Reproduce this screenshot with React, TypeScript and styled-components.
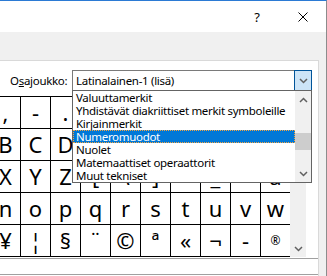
import React from "react";
import styled, { createGlobalStyle } from "styled-components";

const rows: string[][] = [
  [",", "-", ".", "/", "0", "1", "2", "3", "4", "5"],
  ["B", "C", "D", "E", "F", "G", "H", "I", "J", "K"],
  ["X", "Y", "Z", "[", "\\", "]", "^", "_", "`", "a"],
  ["n", "o", "p", "q", "r", "s", "t", "u", "v", "w"],
  ["¥", "¦", "§", "¨", "©", "ª", "«", "¬", "-", "®"],
];

const subsets = [
  "Valuuttamerkit",
  "Yhdistävät diakriittiset merkit symboleille",
  "Kirjainmerkit",
  "Numeromuodot",
  "Nuolet",
  "Matemaattiset operaattorit",
  "Muut tekniset",
];

const Chevron = ({ up }: { up?: boolean }) => (
  <svg width="9" height="6" viewBox="0 0 9 6">
    <path
      d={up ? "M1 5 L4.5 1.5 L8 5" : "M1 1 L4.5 4.5 L8 1"}
      fill="none"
      stroke="#606060"
      strokeWidth="1.5"
    />
  </svg>
);

const App = () => {
  return (
    <>
      <GlobalStyle />
      <Window>
        <TitleBar>
          <CaptionButton>
            <HelpMark>?</HelpMark>
          </CaptionButton>
          <CaptionButton>
            <svg width="10" height="10" viewBox="0 0 10 10">
              <path d="M0.5 0.5 L9.5 9.5 M9.5 0.5 L0.5 9.5" stroke="#000" strokeWidth="1" />
            </svg>
          </CaptionButton>
        </TitleBar>
        <Body>
          <Panel>
            <SubsetRow>
              <Label>
                O<u>s</u>ajoukko:
              </Label>
              <Combo>
                <ComboText>Latinalainen-1 (lisä)</ComboText>
                <ComboButton>
                  <Chevron />
                </ComboButton>
                <DropList>
                  <Items>
                    {subsets.map((s, i) => (
                      <Item key={s} selected={i === 3}>
                        {s}
                      </Item>
                    ))}
                  </Items>
                  <ListScroll>
                    <Arrow>
                      <Chevron up />
                    </Arrow>
                    <Track>
                      <Thumb />
                    </Track>
                    <Arrow>
                      <Chevron />
                    </Arrow>
                  </ListScroll>
                </DropList>
              </Combo>
            </SubsetRow>
            <GridArea>
              <CharGrid>
                {rows.flat().map((c, i) => (
                  <Cell key={i} last={i % 10 === 9}>
                    {c === "®" ? <Small>{c}</Small> : c}
                  </Cell>
                ))}
              </CharGrid>
              <GridScroll>
                <Arrow>
                  <Chevron />
                </Arrow>
              </GridScroll>
            </GridArea>
            <RecentBox />
          </Panel>
        </Body>
      </Window>
    </>
  );
};

const GlobalStyle = createGlobalStyle`
  html, body {
    margin: 0;
    padding: 0;
  }
  body {
    width: 327px;
    height: 276px;
    overflow: hidden;
    background: #f0f0f0;
    font-family: "Noto Sans", "Segoe UI", sans-serif;
  }
`;

const Window = styled.div`
  box-sizing: border-box;
  width: 327px;
  height: 276px;
  display: flex;
  flex-direction: column;
  border-top: 1px solid #2b7ad4;
  border-right: 1px solid #8c8c8c;
  overflow: hidden;
`;

const TitleBar = styled.div`
  height: 31px;
  flex: none;
  display: flex;
  justify-content: flex-end;
  background: #fff;
`;

const CaptionButton = styled.div`
  width: 46px;
  display: flex;
  align-items: center;
  justify-content: center;
  &:first-child {
    padding-left: 3px;
  }
`;

const HelpMark = styled.span`
  font-size: 13px;
  color: #000;
`;

const Body = styled.div`
  flex: 1;
  padding: 28px 7px 0 0;
  background: #f0f0f0;
  display: flex;
  min-height: 0;
`;

const Panel = styled.div`
  flex: 1;
  background: #fff;
  border-top: 1px solid #d9d9d9;
  border-right: 1px solid #d9d9d9;
  display: flex;
  flex-direction: column;
  overflow: hidden;
`;

const SubsetRow = styled.div`
  display: flex;
  align-items: center;
  padding: 9px 0 0 10px;
  font-size: 11.5px;
  letter-spacing: -0.3px;
`;

const Label = styled.div`
  width: 62px;
  color: #000;
`;

const Combo = styled.div`
  position: relative;
  box-sizing: border-box;
  width: 240px;
  height: 21px;
  border: 1px solid #7a7a7a;
  display: flex;
  align-items: center;
  z-index: 2;
`;

const ComboText = styled.div`
  flex: 1;
  padding-left: 3px;
  color: #000;
`;

const ComboButton = styled.div`
  box-sizing: border-box;
  width: 18px;
  height: 21px;
  margin: -1px -1px -1px 0;
  border: 1px solid #005499;
  background: #cce4f7;
  display: flex;
  align-items: center;
  justify-content: center;
`;

const DropList = styled.div`
  position: absolute;
  top: 19px;
  left: -1px;
  box-sizing: border-box;
  width: 240px;
  height: 93px;
  border: 1px solid #646464;
  background: #fff;
  display: flex;
`;

const Items = styled.div`
  flex: 1;
  display: flex;
  flex-direction: column;
`;

const Item = styled.div<{ selected?: boolean }>`
  box-sizing: border-box;
  height: 13px;
  line-height: 13px;
  padding-left: 3px;
  white-space: nowrap;
  color: ${(p) => (p.selected ? "#fff" : "#000")};
  background: ${(p) => (p.selected ? "#0078d7" : "transparent")};
  outline: ${(p) => (p.selected ? "1px dotted #f5a540" : "none")};
  outline-offset: -1px;
`;

const ListScroll = styled.div`
  width: 16px;
  background: #f0f0f0;
  display: flex;
  flex-direction: column;
`;

const Arrow = styled.div`
  height: 17px;
  flex: none;
  display: flex;
  align-items: center;
  justify-content: center;
`;

const Track = styled.div`
  flex: 1;
  padding-top: 25px;
`;

const Thumb = styled.div`
  height: 17px;
  background: #cdcdcd;
`;

const GridArea = styled.div`
  display: flex;
  margin: 5px 11px 0 -9px;
`;

const CharGrid = styled.div`
  display: grid;
  grid-template-columns: repeat(9, 30px) 29px;
  grid-auto-rows: 32px;
  border-top: 1px solid #000;
  font-family: "Noto Sans", sans-serif;
  font-size: 22px;
  color: #000;
`;

const Cell = styled.div<{ last?: boolean }>`
  border-bottom: 1px solid #000;
  border-right: ${(p) => (p.last ? "none" : "1px solid #000")};
  line-height: 31px;
  text-align: center;
`;

const Small = styled.span`
  font-size: 12px;
  vertical-align: 7px;
`;

const GridScroll = styled.div`
  width: 16px;
  background: #f0f0f0;
  display: flex;
  flex-direction: column;
  justify-content: flex-end;
`;

const RecentBox = styled.div`
  height: 15px;
  margin-top: 1px;
  border-top: 1px solid #a0a0a0;
  border-bottom: 1px solid #a0a0a0;
`;

export default App;
